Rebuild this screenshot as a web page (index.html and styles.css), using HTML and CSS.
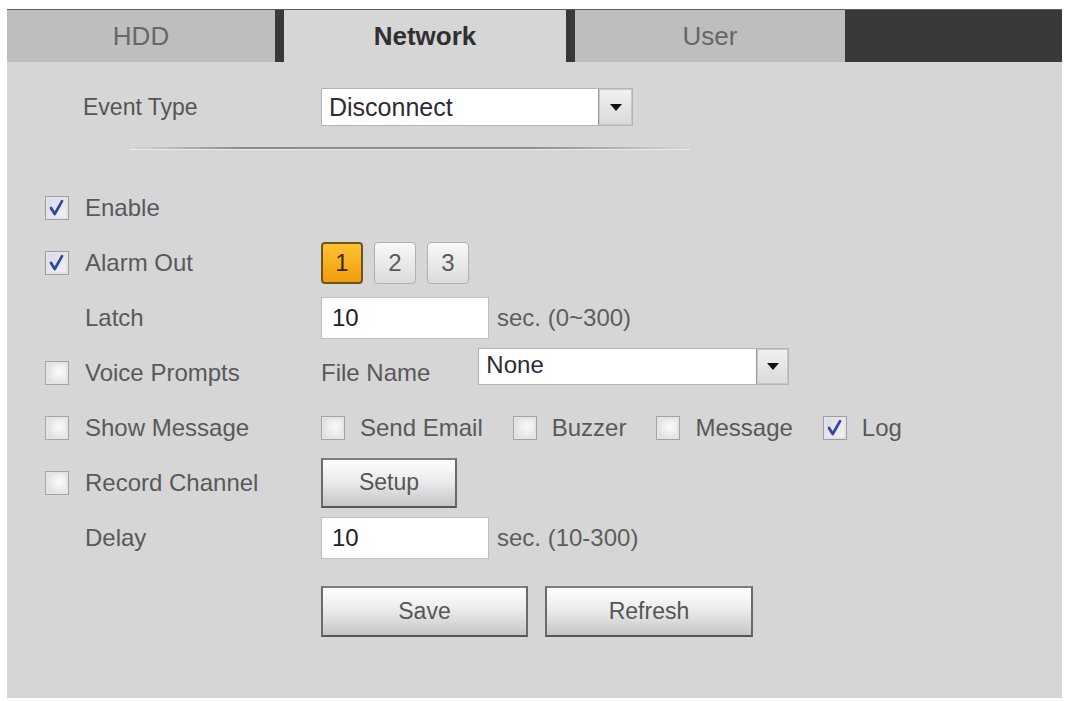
FILE: index.html
```html
<!DOCTYPE html>
<html lang="en">
<head>
<meta charset="utf-8">
<title>Network Event</title>
<link rel="stylesheet" href="styles.css">
</head>
<body>
<div class="panel">
  <div class="tabs">
    <div class="tab">HDD</div>
    <div class="tab active">Network</div>
    <div class="tab">User</div>
  </div>

  <div class="event-row">
    <div class="lead event">Event Type</div>
    <div class="select event-select">
      <span class="select-text">Disconnect</span>
      <span class="select-btn"><span class="tri"></span></span>
    </div>
  </div>
  <div class="divider"></div>

  <div class="rows">
    <div class="row">
      <div class="lead"><span class="cb on"><svg viewBox="0 0 24 24"><path d="M5.5 12 L9.5 18.5 L17.5 4.5"/></svg></span><span class="label">Enable</span></div>
    </div>
    <div class="row">
      <div class="lead"><span class="cb on"><svg viewBox="0 0 24 24"><path d="M5.5 12 L9.5 18.5 L17.5 4.5"/></svg></span><span class="label">Alarm Out</span></div>
      <div class="chans">
        <span class="chan sel">1</span>
        <span class="chan">2</span>
        <span class="chan">3</span>
      </div>
    </div>
    <div class="row">
      <div class="lead plain"><span class="label">Latch</span></div>
      <div class="field">10</div>
      <span class="hint">sec. (0~300)</span>
    </div>
    <div class="row">
      <div class="lead"><span class="cb"></span><span class="label">Voice Prompts</span></div>
      <span class="label">File Name</span>
      <div class="select file-select">
        <span class="select-text">None</span>
        <span class="select-btn"><span class="tri"></span></span>
      </div>
    </div>
    <div class="row">
      <div class="lead"><span class="cb"></span><span class="label">Show Message</span></div>
      <div class="opts">
        <div class="opt"><span class="cb"></span><span class="label">Send Email</span></div>
        <div class="opt"><span class="cb"></span><span class="label">Buzzer</span></div>
        <div class="opt"><span class="cb"></span><span class="label">Message</span></div>
        <div class="opt"><span class="cb on"><svg viewBox="0 0 24 24"><path d="M5.5 12 L9.5 18.5 L17.5 4.5"/></svg></span><span class="label">Log</span></div>
      </div>
    </div>
    <div class="row">
      <div class="lead"><span class="cb"></span><span class="label">Record Channel</span></div>
      <div class="btn setup">Setup</div>
    </div>
    <div class="row">
      <div class="lead plain"><span class="label">Delay</span></div>
      <div class="field">10</div>
      <span class="hint">sec. (10-300)</span>
    </div>
  </div>

  <div class="actions">
    <div class="btn wide">Save</div>
    <div class="btn wide">Refresh</div>
  </div>
</div>
</body>
</html>
```

FILE: styles.css
```css
html, body {
  margin: 0;
  padding: 0;
  background: #ffffff;
}

body {
  font-family: "Liberation Sans", Arial, sans-serif;
  color: #555555;
}

.panel {
  margin: 9px 0 0 7px;
  width: 1055px;
  height: 689px;
  box-sizing: border-box;
  background: #d6d6d6;
  border-top: 1px solid #5c5c5c;
}

/* Tabs */
.tabs {
  display: flex;
  gap: 9px;
  height: 52px;
  background: #393939;
}

.tab {
  display: flex;
  align-items: center;
  justify-content: center;
  background: #bebebe;
  color: #676767;
  font-size: 26px;
  width: 268px;
}

.tab.active {
  width: 282px;
  background: #d6d6d6;
  color: #303030;
  font-weight: bold;
}

.tab:last-child {
  width: 270px;
}

/* Event type */
.event-row {
  display: flex;
  align-items: center;
  margin-top: 26px;
  height: 38px;
}

.lead {
  width: 314px;
  box-sizing: border-box;
  padding-left: 38px;
  display: flex;
  align-items: center;
  gap: 16px;
  flex: none;
}

.lead.event {
  padding-left: 76px;
  font-size: 23px;
  color: #555;
}

.lead.plain {
  padding-left: 78px;
}

.label {
  font-size: 24px;
  color: #595959;
  white-space: nowrap;
}

.select {
  display: flex;
  height: 38px;
  box-sizing: border-box;
  background: #ffffff;
  border: 1px solid #b4b4b4;
}

.event-select {
  width: 312px;
}

.select-text {
  flex: 1;
  display: flex;
  align-items: center;
  padding-left: 7px;
  font-size: 25px;
  color: #2e2b33;
}

.select-btn {
  width: 33px;
  display: flex;
  align-items: center;
  justify-content: center;
  background: linear-gradient(#f2f2f2, #d9d9d9);
  border-left: 1px solid #9a9a9a;
  box-shadow: inset 0 0 0 1px #c8c8c8;
}

.tri {
  width: 0;
  height: 0;
  border-left: 6px solid transparent;
  border-right: 6px solid transparent;
  border-top: 7px solid #111;
}

.divider {
  margin: 21px 0 0 123px;
  width: 560px;
  height: 2px;
  background: linear-gradient(90deg, rgba(130,130,130,0) 0%, #8a8a8a 20%, #8e8e8e 72%, rgba(140,140,140,0) 100%);
  border-bottom: 1px solid #ececec;
}

/* Rows */
.rows {
  margin-top: 30px;
}

.row {
  display: flex;
  align-items: center;
  height: 55px;
}

.cb {
  flex: none;
  width: 24px;
  height: 24px;
  box-sizing: border-box;
  border: 1px solid #a3a3a3;
  background: radial-gradient(circle at 60% 45%, #fbfbfb 0%, #ececec 45%, #d2d2d2 100%);
  box-shadow: inset 0 0 0 2px #e4e4e4;
  display: flex;
  align-items: center;
  justify-content: center;
}

.cb.on {
  background: linear-gradient(135deg, #d6d8e4, #f4f4f8);
  border-color: #9c9cab;
}

.cb svg {
  width: 22px;
  height: 22px;
}

.cb path {
  fill: none;
  stroke: #34479a;
  stroke-width: 3;
  stroke-linecap: round;
  stroke-linejoin: round;
}

.chans {
  display: flex;
  gap: 11px;
}

.chan {
  width: 42px;
  height: 42px;
  box-sizing: border-box;
  border-radius: 4px;
  border: 1px solid #b0b0b0;
  background: linear-gradient(#f8f8f8, #dcdcdc);
  display: flex;
  align-items: center;
  justify-content: center;
  font-size: 24px;
  color: #5a5a5a;
}

.chan.sel {
  border: 2px solid #6b5524;
  background: linear-gradient(#fcc331, #f39c0c);
  color: #3a2a10;
}

.field {
  width: 168px;
  height: 42px;
  box-sizing: border-box;
  background: #ffffff;
  border: 1px solid #bdbdbd;
  display: flex;
  align-items: center;
  padding-left: 10px;
  font-size: 24px;
  color: #222;
}

.hint {
  margin-left: 8px;
  font-size: 24px;
  color: #5e5e5e;
}

.file-select {
  margin-left: 48px;
  width: 311px;
  height: 37px;
  margin-bottom: 13px;
}

.file-select .select-btn {
  width: 31px;
}

.file-select .select-text {
  align-items: flex-start;
  padding-top: 2px;
  font-size: 24px;
}

.opts {
  display: flex;
  gap: 30px;
}

.opt {
  display: flex;
  align-items: center;
  gap: 15px;
}

/* Buttons */
.btn {
  box-sizing: border-box;
  border: 2px solid #6a6a6a;
  border-top-color: #7d7d7d;
  border-bottom-color: #555;
  background: linear-gradient(#fefefe 0%, #ececec 45%, #c6c6c6 100%);
  display: flex;
  align-items: center;
  justify-content: center;
  font-size: 23px;
  color: #565656;
}

.btn.setup {
  width: 136px;
  height: 50px;
}

.actions {
  display: flex;
  gap: 17px;
  margin: 21px 0 0 314px;
}

.btn.wide {
  width: 207px;
  height: 51px;
}

.btn.wide + .btn.wide {
  width: 208px;
}
```
